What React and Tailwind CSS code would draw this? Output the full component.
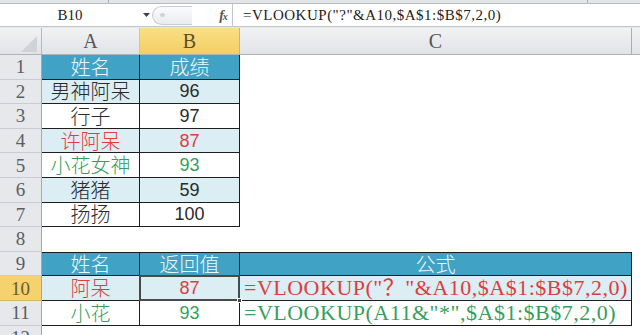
const RED = "text-[#e03c3f]";
const GREEN = "text-[#35a05c]";

const rows = [
  { n: 1, a: "姓名", b: "成绩", head: true },
  { n: 2, a: "男神阿呆", b: "96", fill: true },
  { n: 3, a: "行子", b: "97" },
  { n: 4, a: "许阿呆", b: "87", fill: true, color: RED },
  { n: 5, a: "小花女神", b: "93", color: GREEN },
  { n: 6, a: "猪猪", b: "59", fill: true },
  { n: 7, a: "扬扬", b: "100" },
];

const serif = "font-['Liberation_Serif','Noto_Sans_CJK_SC',serif]";
const cjk = "font-['Noto_Sans_CJK_SC','Noto_Sans',sans-serif] font-light";
const num = "font-['Liberation_Sans',sans-serif] text-[18px]";

function RowHead({ n, active }) {
  return (
    <div
      className={`w-[42px] shrink-0 flex items-center justify-center border-r border-b ${serif} text-[19px] leading-none ${
        active
          ? "bg-[#f6d26e] border-r-[#c9a24a] border-b-[#d8b45a] text-[#6b5a2a]"
          : "bg-[#e6e8ec] border-r-[#a3a9b1] border-b-[#c9ccd2] text-[#5a5d63]"
      }`}
    >
      {n}
    </div>
  );
}

function TableRow({ r }) {
  const bg = r.head ? "bg-[#40a2c4]" : r.fill ? "bg-[#dbeef4]" : "bg-white";
  const txt = r.head ? "text-[#eef8fb]" : r.color || "text-[#2a2a2a]";
  return (
    <div className="flex h-[24.6px]">
      <RowHead n={r.n} />
      <div className={`w-[98px] shrink-0 flex items-center justify-center border-r border-b border-[#1e1e1e] ${bg} ${txt} ${cjk} text-[20px] leading-none`}>
        {r.a}
      </div>
      <div
        className={`w-[100px] shrink-0 flex items-center justify-center border-r border-b border-[#1e1e1e] ${bg} ${txt} ${
          r.head ? `${cjk} text-[20px]` : num
        } leading-none`}
      >
        {r.b}
      </div>
      <div className="flex-1 bg-white" />
    </div>
  );
}

export default function App() {
  return (
    <div className="w-[640px] h-[335px] overflow-hidden bg-white relative">
      {/* ribbon edge */}
      <div className="h-[4px] flex bg-[#e2e4e8] border-b border-[#b7bcc3]">
        <div className="w-[109px] border-r border-[#a9aeb6]" />
        <div className="w-[479px] border-r border-[#a9aeb6]" />
      </div>

      {/* formula bar */}
      <div className="h-[23px] flex items-center bg-white border-b border-[#c3c7cd]">
        <div className={`w-[140px] h-full flex items-center justify-center text-[#222] ${serif} text-[15px]`}>B10</div>
        <div className="w-[12px] h-full flex items-center justify-center">
          <svg width="7" height="4" viewBox="0 0 7 4">
            <path d="M0 0h7L3.5 4z" fill="#444" />
          </svg>
        </div>
        <div className="w-[62px] h-full flex items-center">
          <div className="w-[40px] h-[19px] rounded-l-full border border-r-0 border-[#c9ccd2] bg-gradient-to-b from-[#fbfbfc] to-[#e9ebee] flex items-center pl-[7px]">
            <div className="w-[5px] h-[4px] rounded-full bg-[#d0d3d8]" />
          </div>
        </div>
        <div className="w-[18px] h-full flex items-center justify-center">
          <span className="font-['Liberation_Serif',serif] italic font-bold text-[14px] text-[#555] tracking-[-1px]">
            f<span className="text-[10px]">x</span>
          </span>
        </div>
        <div className={`flex-1 h-full border-l border-[#c3c7cd] pl-[10px] flex items-center text-[#222] ${serif} text-[15px] tracking-[0.5px] whitespace-pre`}>
          =VLOOKUP("?"&A10,$A$1:$B$7,2,0)
        </div>
      </div>
      <div className="h-[1px] bg-[#e4e6ea]" />

      {/* column headers */}
      <div className={`h-[27px] flex bg-gradient-to-b from-[#f1f2f4] to-[#e1e3e7] border-b border-[#aeb3ba] ${serif} text-[20px] leading-none`}>
        <div className="w-[42px] shrink-0 border-r border-[#b4b8bf] flex items-end justify-end pr-[4px] pb-[2px]">
          <svg width="16" height="16" viewBox="0 0 16 16">
            <path d="M16 0V16H0z" fill="#cfd2d7" />
          </svg>
        </div>
        <div className="w-[98px] shrink-0 border-r border-[#c2c6cc] flex items-center justify-center text-[#555]">A</div>
        <div className="w-[100px] shrink-0 border-r border-[#d9b450] bg-gradient-to-b from-[#f9df86] to-[#f4cf62] flex items-center justify-center text-[#5c4f2a]">
          B
        </div>
        <div className="w-[392px] shrink-0 border-r border-[#a9aeb6] flex items-center justify-center text-[#555]">C</div>
        <div className="flex-1" />
      </div>

      {rows.map((r) => (
        <TableRow key={r.n} r={r} />
      ))}

      {/* row 8 */}
      <div className="flex h-[24.6px]">
        <RowHead n={8} />
        <div className="flex-1 bg-white" />
      </div>

      {/* row 9 */}
      <div className={`flex h-[24.6px] ${cjk} text-[20px] leading-none`}>
        <RowHead n={9} />
        <div className="w-[98px] shrink-0 flex items-center justify-center border-r border-b border-t border-[#1e1e1e] bg-[#40a2c4] text-[#eef8fb]">
          姓名
        </div>
        <div className="w-[100px] shrink-0 flex items-center justify-center border-r border-b border-t border-[#1e1e1e] bg-[#40a2c4] text-[#eef8fb]">
          返回值
        </div>
        <div className="w-[392px] shrink-0 flex items-center justify-center border-r border-b border-t border-[#1e1e1e] bg-[#40a2c4] text-[#eef8fb]">
          公式
        </div>
        <div className="flex-1 bg-white" />
      </div>

      {/* row 10 */}
      <div className="flex h-[24.6px]">
        <RowHead n={10} active />
        <div className={`w-[98px] shrink-0 flex items-center justify-center border-r border-b border-[#1e1e1e] bg-[#dbeef4] ${RED} ${cjk} text-[20px] leading-none`}>
          阿呆
        </div>
        <div className={`relative w-[100px] shrink-0 flex items-center justify-center border-r border-b border-[#1e1e1e] bg-[#dbeef4] ${RED} ${num} leading-none`}>
          87
          <div className="absolute -left-[1px] -top-[1px] -right-[1px] -bottom-[1px] border-2 border-[#4a4a4a]" />
          <div className="absolute -right-[3px] -bottom-[3px] w-[5px] h-[5px] bg-[#4a4a4a] border border-white" />
        </div>
        <div className={`w-[392px] shrink-0 flex items-center border-r border-b border-[#1e1e1e] bg-[#dbeef4] ${RED} pl-[4px] ${serif} text-[22px] tracking-[0.5px] leading-none whitespace-pre`}>
          =VLOOKUP("？"&A10,$A$1:$B$7,2,0)
        </div>
        <div className="flex-1 bg-white" />
      </div>

      {/* row 11 */}
      <div className="flex h-[24.6px]">
        <RowHead n={11} />
        <div className={`w-[98px] shrink-0 flex items-center justify-center border-r border-b border-[#1e1e1e] bg-white ${GREEN} ${cjk} text-[20px] leading-none`}>
          小花
        </div>
        <div className={`w-[100px] shrink-0 flex items-center justify-center border-r border-b border-[#1e1e1e] bg-white ${GREEN} ${num} leading-none`}>
          93
        </div>
        <div className={`w-[392px] shrink-0 flex items-center border-r border-b border-[#1e1e1e] bg-white ${GREEN} pl-[4px] ${serif} text-[22px] tracking-[0.5px] leading-none whitespace-pre`}>
          =VLOOKUP(A11&"*",$A$1:$B$7,2,0)
        </div>
        <div className="flex-1 bg-white" />
      </div>

      {/* row 12 */}
      <div className="flex h-[24.6px]">
        <RowHead n={12} />
        <div className="flex-1 bg-white" />
      </div>
    </div>
  );
}
